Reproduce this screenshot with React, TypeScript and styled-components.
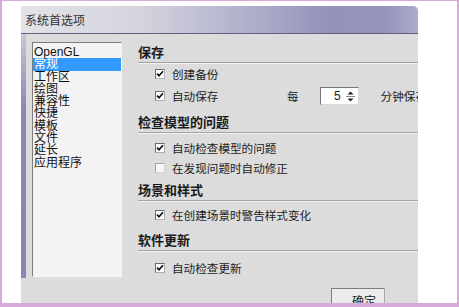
import React from "react";
import styled, { createGlobalStyle } from "styled-components";

const GlobalStyle = createGlobalStyle`
  html, body {
    margin: 0;
    padding: 0;
    background: #fff;
  }
  body {
    font-family: "Liberation Sans", "Noto Sans CJK SC", sans-serif;
    color: #1c1c1c;
  }
`;

const Frame = styled.div`
  width: 459px;
  height: 307px;
  box-sizing: border-box;
  border: solid #d8aada;
  border-width: 1px 2px 4px 2px;
  background: #fff;
  padding: 5px 0 0 19px;
  overflow: hidden;
`;

const Window = styled.div`
  width: 397px;
  height: 330px;
  display: flex;
  flex-direction: column;
  background: #dcdcdc;
  border-top-right-radius: 5px;
  overflow: hidden;
`;

const TitleBar = styled.div`
  height: 28px;
  flex: none;
  box-sizing: border-box;
  display: flex;
  align-items: center;
  padding: 0 0 1px 4px;
  background: linear-gradient(
    90deg,
    #e2e2e8 0%,
    #d4d4de 30%,
    #aeaecb 58%,
    #9292bb 78%,
    #9494bd 92%,
    #acacca 100%
  );
  border-bottom: 1px solid #5f5f80;
  font-family: "Noto Sans CJK SC", sans-serif;
  font-size: 12px;
  color: #333;
`;

const Content = styled.div`
  height: 244px;
  flex: none;
  box-sizing: border-box;
  display: flex;
  align-items: flex-start;
  padding: 8px 0 0 6px;
  border-left: 5px solid;
  border-image: linear-gradient(#c8c8d2 0%, #8a88b4 30%, #8886b2 100%) 1;
`;

const ListBox = styled.div`
  width: 90px;
  height: 235px;
  flex: none;
  box-sizing: border-box;
  padding-top: 3px;
  background: #f3f3f3;
  border: 1px solid;
  border-color: #7c7c7c #f6f6f6 #f6f6f6 #7c7c7c;
`;

const ListItem = styled.div<{ $selected?: boolean }>`
  height: 12.3px;
  line-height: 12.3px;
  padding-left: 1px;
  font-size: 12px;
  white-space: nowrap;
  color: ${(p) => (p.$selected ? "#fff" : "#111")};
  background: ${(p) => (p.$selected ? "#3399ff" : "transparent")};
`;

const Panel = styled.div`
  flex: 1;
  min-width: 0;
  padding: 2px 0 0 16px;
  font-family: "Noto Sans CJK SC", sans-serif;
`;

const Header = styled.div<{ $gap: number }>`
  margin-top: ${(p) => p.$gap}px;
  height: 16px;
  line-height: 16px;
  padding-bottom: 2px;
  font-size: 13px;
  font-weight: 700;
  color: #1a1a1a;
  border-bottom: 1px solid #a4a4a4;
  box-shadow: 0 1px 0 #f2f2f2;
`;

const Rows = styled.div<{ $gap: number; $height: number }>`
  margin-top: ${(p) => p.$gap}px;
  & > * {
    height: ${(p) => p.$height}px;
  }
`;

const Row = styled.div`
  display: flex;
  align-items: center;
  padding-left: 17px;
  white-space: nowrap;
  font-size: 11.6px;
  color: #1c1c1c;
`;

const Box = styled.span<{ $checked?: boolean }>`
  width: 10px;
  height: 10px;
  flex: none;
  box-sizing: border-box;
  margin-right: 7px;
  display: flex;
  align-items: center;
  justify-content: center;
  background: ${(p) => (p.$checked ? "#fff" : "#f6f6f6")};
  border: 1px solid;
  border-color: ${(p) =>
    p.$checked ? "#6c6c6c #b0b0b0 #b0b0b0 #6c6c6c" : "#a8a8a8 #d4d4d4 #d4d4d4 #a8a8a8"};
`;

const Label = styled.span<{ $width?: number }>`
  width: ${(p) => (p.$width ? `${p.$width}px` : "auto")};
  flex: none;
`;

const Spinner = styled.div`
  width: 39px;
  height: 18px;
  flex: none;
  box-sizing: border-box;
  margin: 0 22px 0 21px;
  display: flex;
  background: #fff;
  border: 1px solid;
  border-color: #767676 #d8d8d8 #d8d8d8 #767676;
`;

const SpinValue = styled.span`
  flex: 1;
  text-align: right;
  padding-right: 4px;
  line-height: 16px;
  font-family: "Liberation Sans", sans-serif;
  font-size: 12px;
`;

const SpinButtons = styled.div`
  width: 12px;
  margin-right: 1px;
  display: flex;
  flex-direction: column;
  justify-content: center;
  align-items: center;
  gap: 1px;
`;

const SpinDivider = styled.span`
  width: 9px;
  height: 1px;
  background: #8a8a8a;
`;

const Footer = styled.div`
  display: flex;
  justify-content: flex-end;
  padding: 10px 33px 0 0;
`;

const Button = styled.div`
  width: 54px;
  height: 24px;
  box-sizing: border-box;
  padding-left: 12px;
  display: flex;
  align-items: center;
  justify-content: center;
  background: #ececec;
  border: 1px solid;
  border-color: #7e7e7e #a8a8a8 #a8a8a8 #7e7e7e;
  font-family: "Noto Sans CJK SC", sans-serif;
  font-size: 12px;
  color: #222;
`;

const Tick = () => (
  <svg width="8" height="8" viewBox="0 0 8 8">
    <path d="M1 3.6 L3 5.8 L7 1.2" fill="none" stroke="#111" strokeWidth="1.7" />
  </svg>
);

const Arrow = ({ up }: { up?: boolean }) => (
  <svg width="7" height="4" viewBox="0 0 7 4">
    <path d={up ? "M0.5 3.5 L3.5 0.5 L6.5 3.5 Z" : "M0.5 0.5 L3.5 3.5 L6.5 0.5 Z"} fill="#222" />
  </svg>
);

const Check = ({ checked, children }: { checked?: boolean; children: React.ReactNode }) => (
  <Row>
    <Box $checked={checked}>{checked && <Tick />}</Box>
    {children}
  </Row>
);

const categories = ["OpenGL", "常规", "工作区", "绘图", "兼容性", "快捷", "模板", "文件", "延长", "应用程序"];

export default function App() {
  return (
    <>
      <GlobalStyle />
      <Frame>
        <Window>
          <TitleBar>系统首选项</TitleBar>
          <Content>
            <ListBox>
              {categories.map((c) => (
                <ListItem key={c} $selected={c === "常规"}>
                  {c}
                </ListItem>
              ))}
            </ListBox>
            <Panel>
              <Header $gap={0}>保存</Header>
              <Rows $gap={0} $height={22}>
                <Check checked>创建备份</Check>
                <Check checked>
                  <Label $width={115}>自动保存</Label>
                  <Label>每</Label>
                  <Spinner>
                    <SpinValue>5</SpinValue>
                    <SpinButtons>
                      <Arrow up />
                      <SpinDivider />
                      <Arrow />
                    </SpinButtons>
                  </Spinner>
                  <Label>分钟保存一次</Label>
                </Check>
              </Rows>

              <Header $gap={7}>检查模型的问题</Header>
              <Rows $gap={5} $height={20}>
                <Check checked>自动检查模型的问题</Check>
                <Check>在发现问题时自动修正</Check>
              </Rows>

              <Header $gap={4}>场景和样式</Header>
              <Rows $gap={4} $height={20}>
                <Check checked>在创建场景时警告样式变化</Check>
              </Rows>

              <Header $gap={7}>软件更新</Header>
              <Rows $gap={7} $height={20}>
                <Check checked>自动检查更新</Check>
              </Rows>
            </Panel>
          </Content>
          <Footer>
            <Button>确定</Button>
          </Footer>
        </Window>
      </Frame>
    </>
  );
}
